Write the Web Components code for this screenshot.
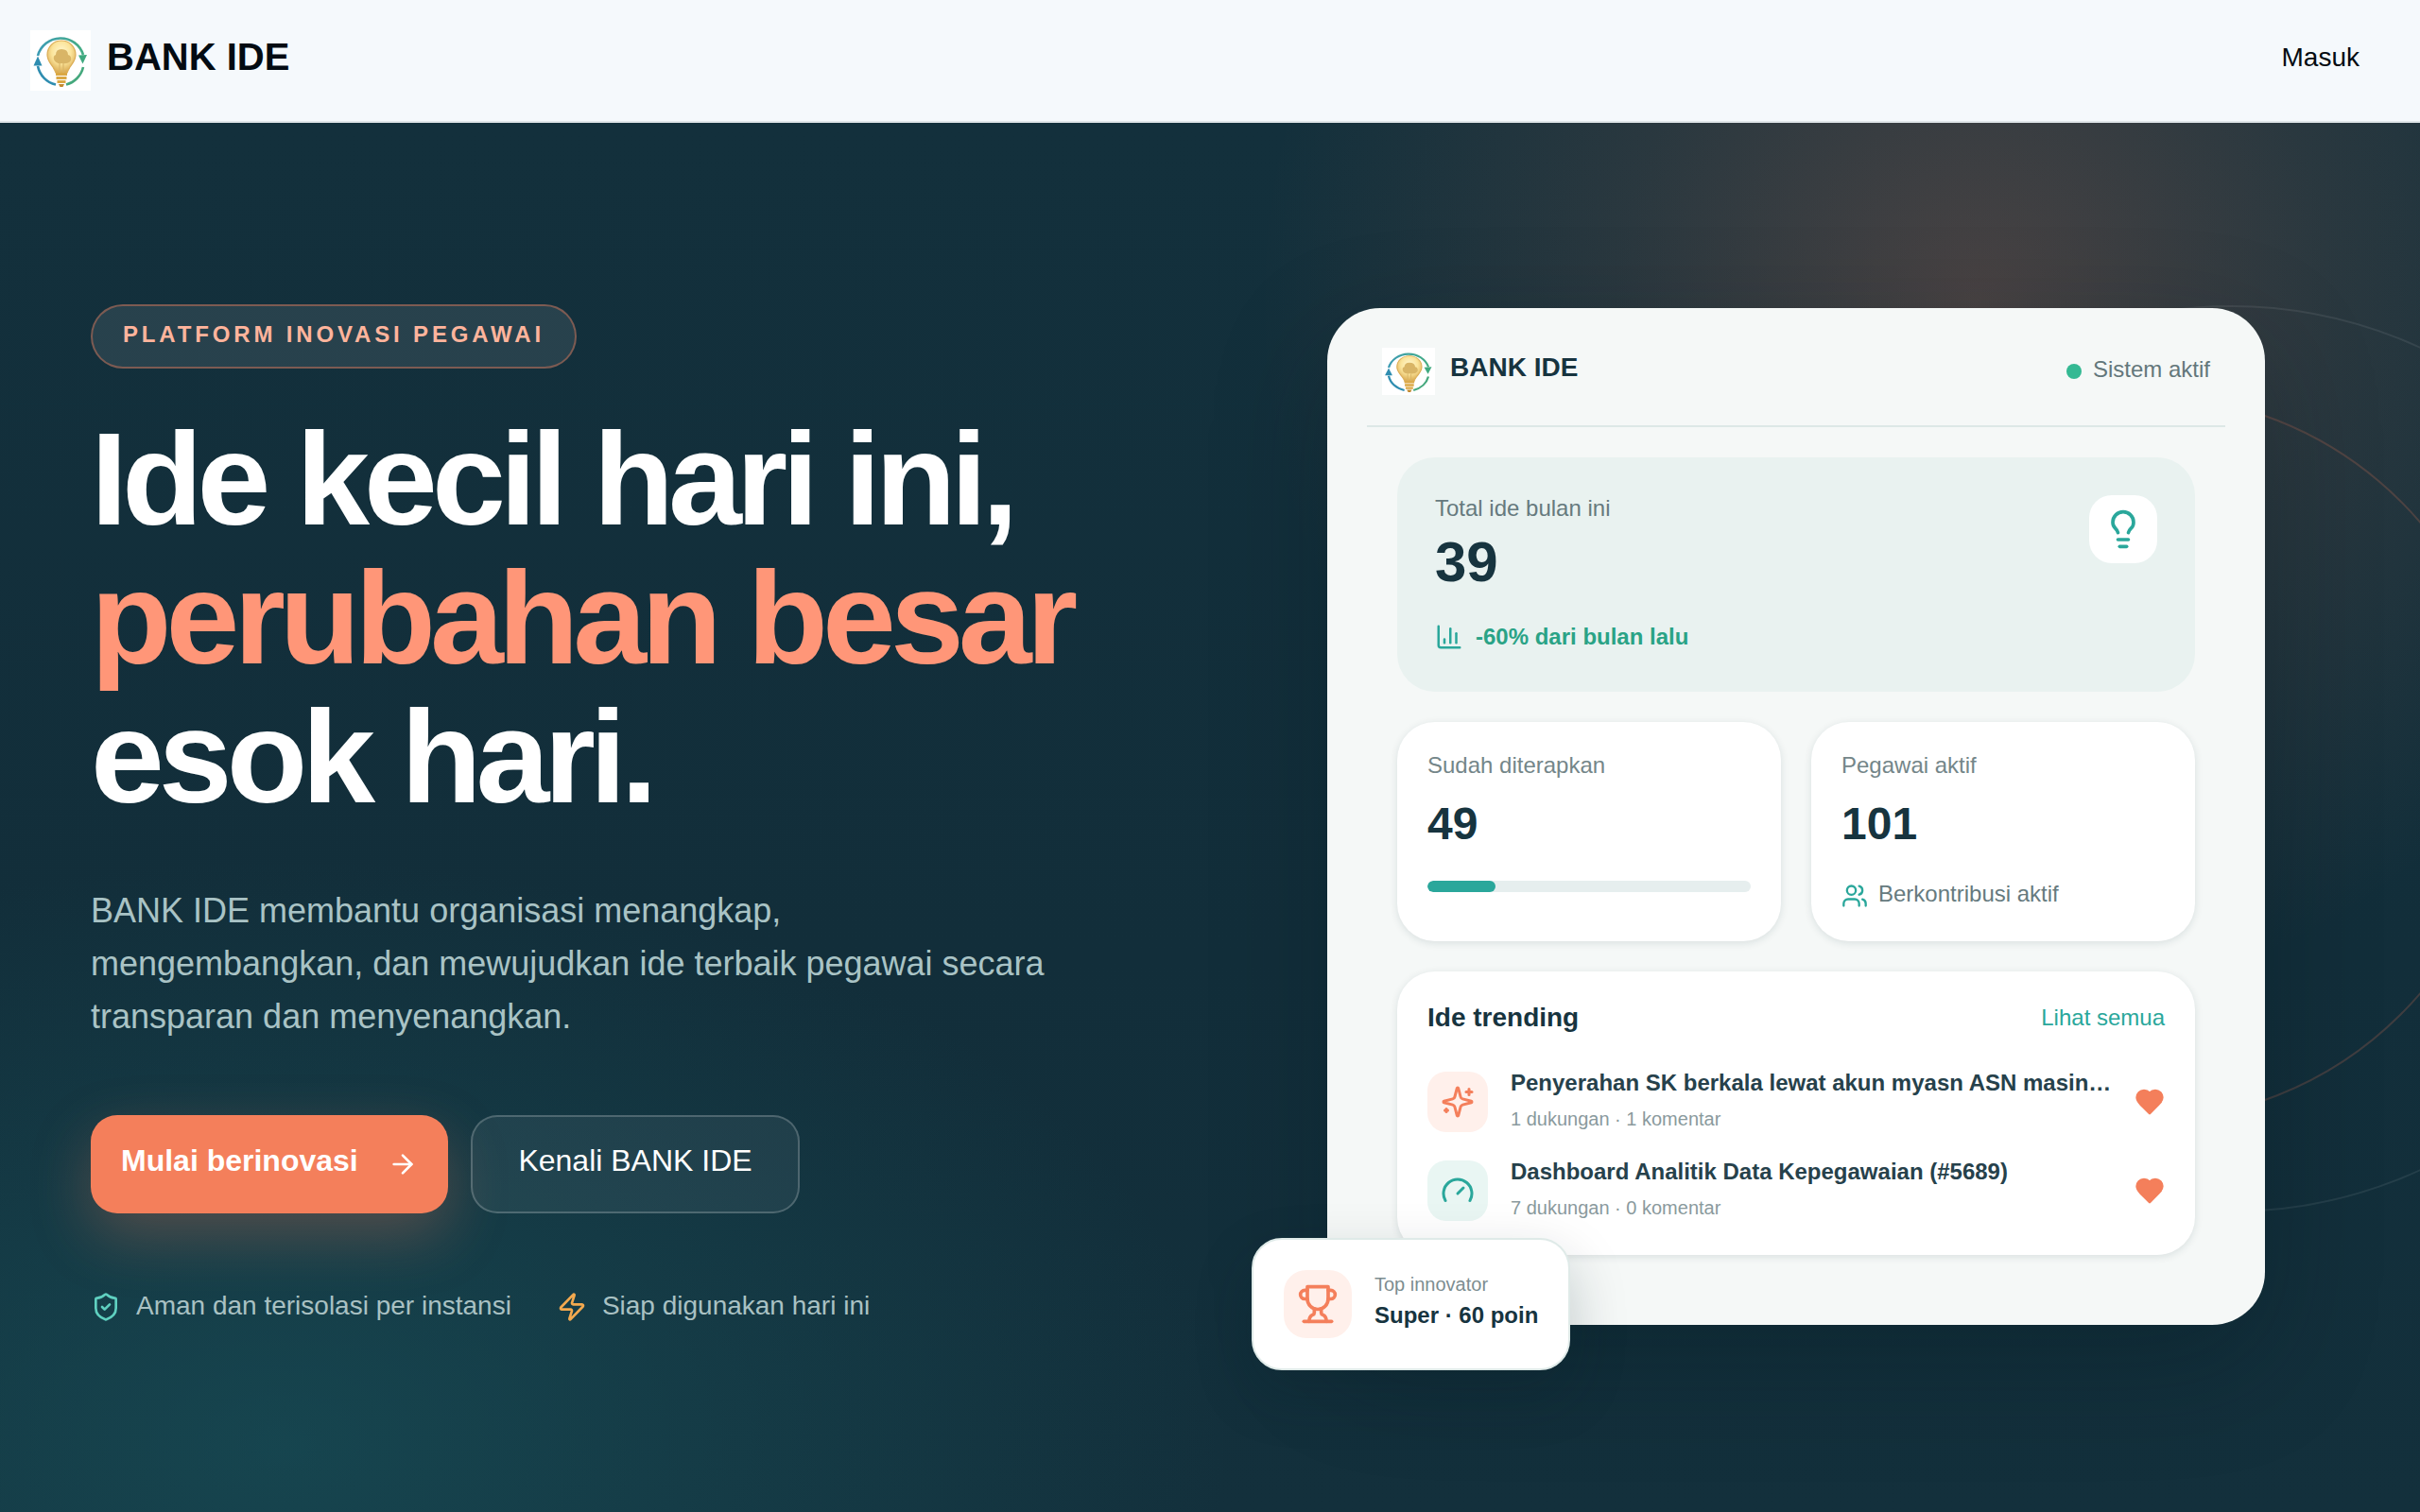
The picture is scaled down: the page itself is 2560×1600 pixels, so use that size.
<!DOCTYPE html>
<html lang="id">
<head>
<meta charset="utf-8">
<title>BANK IDE</title>
<style>
  html, body { margin: 0; padding: 0; }
  body {
    width: 2560px; height: 1600px; overflow: hidden;
    font-family: "Liberation Sans", Arial, sans-serif;
    background: #13303c;
  }
</style>
</head>
<body>
<bi-app></bi-app>

<script>
const ICONS = {
  lightbulb: '<path d="M15 14c.2-1 .7-1.7 1.5-2.5 1-.9 1.5-2.2 1.5-3.5A6 6 0 0 0 6 8c0 1 .2 2.2 1.5 3.5.7.7 1.3 1.5 1.5 2.5"/><path d="M9 18h6"/><path d="M10 22h4"/>',
  arrow: '<path d="M5 12h14"/><path d="m12 5 7 7-7 7"/>',
  shield: '<path d="M20 13c0 5-3.5 7.5-7.66 8.95a1 1 0 0 1-.67-.01C7.5 20.5 4 18 4 13V6a1 1 0 0 1 1-1c2 0 4.5-1.2 6.24-2.72a1.17 1.17 0 0 1 1.52 0C14.51 3.81 17 5 19 5a1 1 0 0 1 1 1z"/><path d="m9 12 2 2 4-4"/>',
  zap: '<path d="M4 14a1 1 0 0 1-.78-1.63l9.9-10.2a.5.5 0 0 1 .86.46l-1.92 6.02A1 1 0 0 0 13 10h7a1 1 0 0 1 .78 1.63l-9.9 10.2a.5.5 0 0 1-.86-.46l1.92-6.02A1 1 0 0 0 11 14z"/>',
  chart: '<path d="M3 3v16a2 2 0 0 0 2 2h16"/><path d="M18 17V9"/><path d="M13 17V5"/><path d="M8 17v-3"/>',
  users: '<path d="M16 21v-2a4 4 0 0 0-4-4H6a4 4 0 0 0-4 4v2"/><circle cx="9" cy="7" r="4"/><path d="M22 21v-2a4 4 0 0 0-3-3.87"/><path d="M16 3.13a4 4 0 0 1 0 7.75"/>',
  sparkles: '<path d="M9.937 15.5A2 2 0 0 0 8.5 14.063l-6.135-1.582a.5.5 0 0 1 0-.962L8.5 9.936A2 2 0 0 0 9.937 8.5l1.582-6.135a.5.5 0 0 1 .963 0L14.063 8.5A2 2 0 0 0 15.5 9.937l6.135 1.581a.5.5 0 0 1 0 .964L15.5 14.063a2 2 0 0 0-1.437 1.437l-1.582 6.135a.5.5 0 0 1-.963 0z"/><path d="M20 3v4"/><path d="M22 5h-4"/><path d="M4 17v2"/><path d="M5 18H3"/>',
  gauge: '<path d="m12 14 4-4"/><path d="M3.34 19a10 10 0 1 1 17.32 0"/>',
  trophy: '<path d="M6 9H4.5a2.5 2.5 0 0 1 0-5H6"/><path d="M18 9h1.5a2.5 2.5 0 0 0 0-5H18"/><path d="M4 22h16"/><path d="M10 14.66V17c0 .55-.47.98-.97 1.21C7.85 18.75 7 20.24 7 22"/><path d="M14 14.66V17c0 .55.47.98.97 1.21C16.15 18.75 17 20.24 17 22"/><path d="M18 2H6v7a6 6 0 0 0 12 0V2Z"/>',
  heart: '<path fill="currentColor" d="M19 14c1.49-1.46 3-3.21 3-5.5A5.5 5.5 0 0 0 16.5 3c-1.76 0-3 .5-4.5 2-1.5-1.5-2.74-2-4.5-2A5.5 5.5 0 0 0 2 8.5c0 2.3 1.5 4.05 3 5.5l7 7Z"/>'
};

class BiIcon extends HTMLElement {
  connectedCallback() {
    if (this.shadowRoot) return;
    const size = this.getAttribute('size') || 24;
    const color = this.getAttribute('color') || 'currentColor';
    const name = this.getAttribute('name');
    this.attachShadow({ mode: 'open' }).innerHTML = `
      <style>:host{display:inline-flex;flex:none;width:${size}px;height:${size}px;color:${color}}svg{display:block;width:100%;height:100%}</style>
      <svg viewBox="0 0 24 24" fill="none" stroke="currentColor" stroke-width="2" stroke-linecap="round" stroke-linejoin="round">${ICONS[name]}</svg>`;
  }
}
customElements.define('bi-icon', BiIcon);

let logoId = 0;
class BiLogo extends HTMLElement {
  connectedCallback() {
    if (this.shadowRoot) return;
    const w = this.getAttribute('w') || 64, h = this.getAttribute('h') || 64;
    const p = 'l' + (logoId++);
    this.attachShadow({ mode: 'open' }).innerHTML = `
      <style>:host{display:block;flex:none;width:${w}px;height:${h}px;background:#fff}svg{display:block;width:100%;height:100%;filter:blur(.4px)}</style>
      <svg viewBox="0 0 64 64" preserveAspectRatio="none">
        <defs>
          <linearGradient id="${p}a" x1="0" y1="0" x2="1" y2="0"><stop offset="0" stop-color="#3d9cb4"/><stop offset="1" stop-color="#45ad84"/></linearGradient>
          <radialGradient id="${p}b" cx=".5" cy=".36" r=".62"><stop offset="0" stop-color="#fff7cf"/><stop offset=".55" stop-color="#fbe49a"/><stop offset="1" stop-color="#dcae57"/></radialGradient>
        </defs>
        <path d="M8 27 A25 25 0 0 1 56 26" fill="none" stroke="url(#${p}a)" stroke-width="2.6"/>
        <path d="M51 26.5 L60 26 L55.5 35.5 Z" fill="#3fa97f"/>
        <path d="M27 57.5 A25 25 0 0 1 8 38" fill="none" stroke="#2f8db0" stroke-width="2.6"/>
        <path d="M3.5 37.5 L12.5 37.5 L8 27.5 Z" fill="#2f8db0"/>
        <path d="M38 57.5 A25 25 0 0 0 56 39" fill="none" stroke="#45a87d" stroke-width="2.6"/>
        <path d="M33 11 C24.5 11 18 17.500 18 26 C18 32 21.500 35 24 39 C25.500 41.500 26.500 43 27 45 L39 45 C39.500 43 40.500 41.500 42 39 C44.500 35 48 32 48 26 C48 17.500 41.500 11 33 11 Z" fill="url(#${p}b)" stroke="#dcae57" stroke-width="1.2"/>
        <path d="M25 31 q-1-4 2-5 q0-6 6-6 q7 0 7 6 q4 1 3 6 q-3 4-9 3 q-7 1-9-4 Z" fill="#d9b566"/>
        <path d="M31 35 L31 45 M35 35 L35 45" stroke="#d9b566" stroke-width="1.1"/>
        <path d="M27 45 H39 V48 H27 Z M27.500 49 H38.500 V52 H27.500 Z M28.500 53 H37.500 V56 H28.500 Z" fill="#dba844"/>
        <path d="M30 57 H36 L34.500 60 H31.500 Z" fill="#c48a2e"/>
      </svg>`;
  }
}
customElements.define('bi-logo', BiLogo);

function def(name, html) {
  const t = document.createElement('template');
  t.innerHTML = html;
  customElements.define(name, class extends HTMLElement {
    constructor() { super(); this.attachShadow({ mode: 'open' }).appendChild(t.content.cloneNode(true)); }
  });
}

def('bi-nav', `
  <style>
    :host{display:flex;align-items:center;justify-content:space-between;box-sizing:border-box;height:130px;padding:0 64px 0 32px;background:#f5f9fc;border-bottom:2px solid #dfe5e8}
    .brand{display:flex;align-items:center;gap:17px}
    .name{font-size:40px;font-weight:700;color:#030b12;line-height:48px;padding-bottom:8px}
    .in{font-size:28px;color:#050c12;line-height:36px;padding-bottom:7px}
  </style>
  <div class="brand"><bi-logo></bi-logo><span class="name">BANK IDE</span></div>
  <span class="in">Masuk</span>`);

def('bi-copy', `
  <style>
    :host{display:block;color:#fff;padding-bottom:9px}
    .badge{display:inline-flex;box-sizing:border-box;height:68px;align-items:center;padding:0 32px 3px;border:2px solid rgba(244,127,91,.42);border-radius:34px;background:rgba(255,255,255,.09);color:#ffb49c;font-size:24px;font-weight:700;letter-spacing:3.84px}
    h1{margin:43px 0 0;font-size:140px;line-height:147px;font-weight:700;letter-spacing:-6px}
    h1 span{display:block}
    h1 em{font-style:normal;color:#ff9678;display:block}
    p{margin:62px 0 0;max-width:1020px;font-size:36px;line-height:56px;color:#a9c3c5}
    .cta{display:flex;gap:24px;margin-top:76px}
    .btn{display:flex;align-items:center;box-sizing:border-box;height:104px;border-radius:28px;font-size:32px;color:#fff;white-space:nowrap}
    .btn span{padding-bottom:7px;flex:none}
    .pri{width:378px;padding:0 32px;justify-content:space-between;background:#f47f5b;font-weight:700;box-shadow:0 24px 64px rgba(244,127,91,.28)}
    .sec{width:348px;justify-content:center;border:2px solid rgba(255,255,255,.2);background:rgba(255,255,255,.06)}
    .trust{display:flex;gap:48px;margin-top:82px;font-size:28px;color:#a9c1c3}
    .trust div{display:flex;align-items:center;gap:16px}
    .trust span{padding-bottom:2px}
  </style>
  <div class="badge">PLATFORM INOVASI PEGAWAI</div>
  <h1><span>Ide kecil hari ini,</span><em>perubahan besar</em><span>esok hari.</span></h1>
  <p>BANK IDE membantu organisasi menangkap, mengembangkan, dan mewujudkan ide terbaik pegawai secara transparan dan menyenangkan.</p>
  <div class="cta">
    <div class="btn pri"><span>Mulai berinovasi</span><bi-icon name="arrow" size="32"></bi-icon></div>
    <div class="btn sec"><span>Kenali BANK IDE</span></div>
  </div>
  <div class="trust">
    <div><bi-icon name="shield" size="32" color="#5fd0c0"></bi-icon><span>Aman dan terisolasi per instansi</span></div>
    <div><bi-icon name="zap" size="32" color="#f3a94f"></bi-icon><span>Siap digunakan hari ini</span></div>
  </div>`);

def('bi-head', `
  <style>
    :host{display:flex;align-items:center;justify-content:space-between;padding:0 16px 32px;border-bottom:2px solid #dde8e6}
    .l{display:flex;align-items:center;gap:16px}
    .t{font-size:28px;font-weight:700;color:#17343f;line-height:34px;padding-bottom:8px}
    .r{display:flex;align-items:center;gap:12px;font-size:24px;color:#63777b;padding-bottom:1px}
    .r span{line-height:28px;padding-bottom:4px}
    i{display:block;width:16px;height:16px;border-radius:50%;background:#34b993}
  </style>
  <div class="l"><bi-logo w="56" h="50"></bi-logo><span class="t">BANK IDE</span></div>
  <div class="r"><i></i><span>Sistem aktif</span></div>`);

def('bi-total', `
  <style>
    :host{display:flex;justify-content:space-between;align-items:flex-start;padding:40px;border-radius:40px;background:#e9f2f0}
    .lb{font-size:24px;line-height:28px;color:#667a7e}
    .v{margin-top:10px;font-size:60px;line-height:66px;font-weight:700;color:#17343f}
    .tr{display:flex;align-items:center;gap:13px;height:36px;margin-top:28px;font-size:24px;font-weight:700;color:#2aa386}
    .ic{display:flex;align-items:center;justify-content:center;width:72px;height:72px;border-radius:24px;background:#fff}
  </style>
  <div>
    <div class="lb">Total ide bulan ini</div>
    <div class="v">39</div>
    <div class="tr"><bi-icon name="chart" size="30" color="#2aa79b"></bi-icon><span>-60% dari bulan lalu</span></div>
  </div>
  <div class="ic"><bi-icon name="lightbulb" size="44" color="#2aa79b"></bi-icon></div>`);

def('bi-stat', `
  <style>
    :host{display:block;box-sizing:border-box;padding:32px;border-radius:40px;background:#fff;box-shadow:0 2px 8px rgba(20,48,60,.12)}
    ::slotted([slot=l]){display:block;font-size:24px;line-height:28px;color:#748689}
    ::slotted([slot=v]){display:block;margin-top:20px;margin-bottom:32px;font-size:48px;line-height:56px;font-weight:700;color:#17343f}
  </style>
  <slot name="l"></slot><slot name="v"></slot><slot></slot>`);

def('bi-progress', `
  <style>
    :host{display:block;height:12px;border-radius:6px;background:#e6eeee;overflow:hidden}
    div{width:21%;height:100%;border-radius:6px;background:#2aa79b}
  </style><div></div>`);

def('bi-note', `
  <style>
    :host{display:flex;align-items:center;gap:11px;height:32px;font-size:24px;color:#667a7e}
    span{padding-bottom:4px}
  </style>
  <bi-icon name="users" size="28" color="#2aa79b"></bi-icon><span><slot></slot></span>`);

def('bi-row', `
  <style>
    :host{display:flex;align-items:center;height:64px}
    .ic{display:flex;align-items:center;justify-content:center;flex:none;width:64px;height:64px;border-radius:20px;background:var(--tile);margin-right:24px}
    .tx{flex:1;min-width:0;padding-bottom:2px}
    ::slotted([slot=t]){display:block;font-size:24px;line-height:28px;font-weight:700;color:#26414b;white-space:nowrap}
    ::slotted([slot=m]){display:block;margin-top:10px;font-size:20px;line-height:28px;color:#8a9a9d}
  </style>
  <div class="ic"><slot name="i"></slot></div>
  <div class="tx"><slot name="t"></slot><slot name="m"></slot></div>
  <bi-icon name="heart" size="32" color="#f47f5b"></bi-icon>`);

def('bi-trending', `
  <style>
    :host{display:block;padding:32px 32px 36px;border-radius:40px;background:#fff;box-shadow:0 2px 8px rgba(20,48,60,.12)}
    .h{display:flex;justify-content:space-between;align-items:center;height:34px;margin-bottom:40px}
    .h b{font-size:28px;color:#17343f}
    .h a{font-size:24px;color:#2aa79b}
    .list{display:flex;flex-direction:column;gap:30px}
  </style>
  <div class="h"><b>Ide trending</b><a>Lihat semua</a></div>
  <div class="list"><slot></slot></div>`);

def('bi-float', `
  <style>
    :host{position:absolute;left:-80px;bottom:-48px;display:flex;align-items:center;gap:24px;padding:32px;border:2px solid #dfeae8;border-radius:32px;background:#fff;box-shadow:0 24px 60px rgba(10,30,40,.22)}
    .ic{display:flex;align-items:center;justify-content:center;width:72px;height:72px;border-radius:24px;background:#fff0eb}
    .tx{padding-bottom:6px}
    .a{font-size:20px;line-height:24px;color:#7c8d90}
    .b{margin-top:6px;font-size:24px;line-height:30px;font-weight:700;color:#17343f;white-space:nowrap}
  </style>
  <div class="ic"><bi-icon name="trophy" size="44" color="#f47f5b"></bi-icon></div>
  <div class="tx"><div class="a">Top innovator</div><div class="b">Super · 60 poin</div></div>`);

def('bi-dash', `
  <style>
    :host{position:relative;display:block;box-sizing:border-box;width:992px;margin-bottom:2px;padding:42px;border-radius:56px;background:#f5f8f7;box-shadow:0 40px 120px rgba(5,20,28,.28)}
    .in{display:flex;flex-direction:column;gap:32px;padding:32px 32px 32px}
    .two{display:grid;grid-template-columns:1fr 1fr;gap:32px}
  </style>
  <bi-head></bi-head>
  <div class="in">
    <bi-total></bi-total>
    <div class="two"><slot name="stats"></slot></div>
    <slot name="trend"></slot>
  </div>
  <bi-float></bi-float>`);

def('bi-hero', `
  <style>
    :host{position:relative;display:grid;grid-template-columns:1fr 992px;align-items:center;box-sizing:border-box;height:1470px;padding:0 164px 0 96px;overflow:hidden;
      background:
        radial-gradient(circle 760px at 2090px 190px, rgba(244,127,91,.24), rgba(244,127,91,.10) 50%, rgba(244,127,91,0) 100%),
        radial-gradient(ellipse 1000px 620px at 300px 1400px, rgba(26,92,100,.48), rgba(26,92,100,0) 100%),
        linear-gradient(180deg,#13303c 0%,#122e3a 60%,#13303c 100%);}
    .ring{position:absolute;border-radius:50%;box-sizing:border-box}
    .r1{left:1880px;top:193px;width:960px;height:960px;border:2px solid rgba(255,255,255,.08)}
    .r2{left:1883px;top:287px;width:770px;height:770px;border:2px solid rgba(244,127,91,.2)}
    bi-copy,bi-dash{position:relative}
  </style>
  <div class="ring r1"></div><div class="ring r2"></div>
  <bi-copy></bi-copy>
  <slot></slot>`);

def('bi-app', `
  <style>:host{display:block;width:2560px;height:1600px}</style>
  <bi-nav></bi-nav>
  <bi-hero>
    <bi-dash>
      <bi-stat slot="stats"><span slot="l">Sudah diterapkan</span><span slot="v">49</span><bi-progress></bi-progress></bi-stat>
      <bi-stat slot="stats"><span slot="l">Pegawai aktif</span><span slot="v">101</span><bi-note>Berkontribusi aktif</bi-note></bi-stat>
      <bi-trending slot="trend">
        <bi-row style="--tile:#fff0eb"><bi-icon slot="i" name="sparkles" size="36" color="#f47f5b"></bi-icon><span slot="t">Penyerahan SK berkala lewat akun myasn ASN masin…</span><span slot="m">1 dukungan · 1 komentar</span></bi-row>
        <bi-row style="--tile:#e9f6f3"><bi-icon slot="i" name="gauge" size="36" color="#2aa79b"></bi-icon><span slot="t">Dashboard Analitik Data Kepegawaian (#5689)</span><span slot="m">7 dukungan · 0 komentar</span></bi-row>
      </bi-trending>
    </bi-dash>
  </bi-hero>`);
</script>
</body>
</html>
